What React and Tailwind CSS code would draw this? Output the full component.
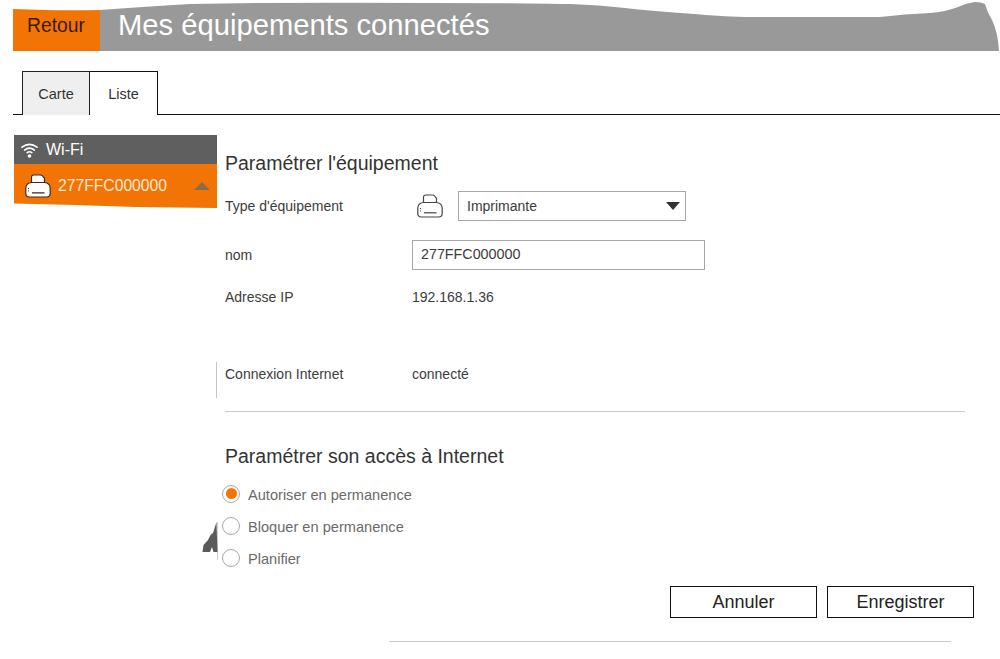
import React from "react";

function PrinterIcon({ fill, stroke, className }) {
  return (
    <svg viewBox="0 0 26 24" className={className} fill="none" stroke={stroke} strokeWidth="1.2" strokeLinejoin="round">
      <path d="M6.5 11V3.2Q6.5 1 8.7 1H15.5Q16.8 1 17.6 2L19.5 4.4V11" fill={fill} />
      <path d="M6.5 8.5H19.5Q22.5 8.8 24 10.5Q25.2 12 25.2 14.5V19.5Q25.2 23 21.5 23H4.5Q0.8 23 0.8 19.5V14.5Q0.8 12 2 10.5Q3.5 8.8 6.5 8.5Z" fill={fill} />
      <path d="M7 18.8H19.5" />
      <path d="M3.5 14V18" strokeDasharray="1 1.4" strokeWidth="1" />
    </svg>
  );
}

function WifiIcon() {
  return (
    <svg viewBox="0 0 18 18" className="w-[17px] h-[17px]" fill="none" stroke="#fff" strokeWidth="1.7" strokeLinecap="round">
      <path d="M1 5.5Q9 -0.5 17 5.5" />
      <path d="M3.8 8.5Q9 4.5 14.2 8.5" />
      <path d="M6.5 11.2Q9 9.4 11.5 11.2" />
      <circle cx="9" cy="14.8" r="1.9" fill="#fff" stroke="none" />
    </svg>
  );
}

function InfoRow({ label, className, children }) {
  return (
    <div className={`flex items-center ${className}`}>
      <span className="w-[187px] shrink-0 text-[14px] text-[#3c3c3c]">{label}</span>
      {children}
    </div>
  );
}

function RadioRow({ label, checked, className }) {
  return (
    <div className={`flex items-center gap-[8px] ${className}`}>
      <span className="w-[18px] h-[18px] rounded-full border border-[#a8a8a8] bg-white flex items-center justify-center shrink-0">
        {checked && <span className="w-[11px] h-[11px] rounded-full bg-[#f27405]" />}
      </span>
      <span className="text-[14.6px] leading-[18px] text-[#6a6a6a] mt-[3px]">{label}</span>
    </div>
  );
}

export default function App() {
  return (
    <div className="relative w-[1000px] h-[659px] overflow-hidden bg-white font-['Liberation_Sans',Arial,sans-serif]">
      {/* --- HEADER --- */}
      <div className="ml-[13px] h-[51px] bg-[#999999] flex">
        <div className="w-[87px] bg-[#f27405] pt-[15px] pl-[14px] text-[19.3px] leading-[22px] text-[#3a1a04]">Retour</div>
        <h1 className="ml-[18px] pt-[8px] text-[29.2px] leading-[34px] text-white">Mes équipements connectés</h1>
      </div>

      {/* torn top edge of the screenshot */}
      <svg viewBox="0 0 1000 52" className="absolute left-0 top-0 w-[1000px] h-[52px]" fill="#fff">
        <path d="M0 0H1000V51.5H999Q998 32 992 20Q987 12 985 4Q981 2 975 2Q966 3 958 7Q945 12 930 13Q905 14 880 17H745Q715 16 695 14Q650 11 625 8Q600 5 570 4Q530 3 430 3Q300 2 190 4Q140 7 100 10Q60 11 13 9V51.5H0Z" />
      </svg>

      {/* --- TABS --- */}
      <div className="relative ml-[13px] mt-[20px] h-[44px] border-b border-[#111] flex pl-[9px]">
        <div className="w-[68px] h-[44px] bg-[#efefef] border-l border-t border-r border-[#222] flex items-center justify-center text-[14.5px] text-[#333] pt-[2px]">Carte</div>
        <div className="w-[68px] h-[44px] bg-white border-t border-r border-[#111] flex items-center justify-center text-[14.5px] text-[#333] pt-[2px]">Liste</div>
      </div>

      <div className="flex">
        {/* --- SIDEBAR --- */}
        <div className="ml-[14px] w-[203px] mt-[20px] shrink-0">
          <div className="h-[29px] bg-[#5f5f5f] flex items-center pl-[7px] gap-[8px] text-[16px] text-white pt-[1px]">
            <WifiIcon />
            Wi-Fi
          </div>
          <div className="h-[44px] bg-[#f27405] flex items-center pl-[11px] text-[15.7px] text-[#ffe9d2] [clip-path:polygon(0_0,100%_0,100%_100%,60%_98%,30%_93%,0_90%)]">
            <PrinterIcon fill="#fff" stroke="#3a2a1a" className="w-[26px] h-[24px] mb-[1px]" />
            <span className="ml-[7px]">277FFC000000</span>
            <span className="ml-auto mr-[7px] w-0 h-0 border-l-[8px] border-r-[8px] border-b-[8px] border-l-transparent border-r-transparent border-b-[#8f6a48]" />
          </div>
        </div>

        {/* --- FORM --- */}
        <div className="ml-[8px] w-[740px] shrink-0">
          <h2 className="mt-[36px] text-[19.5px] leading-[24px] text-[#333]">Paramétrer l'équipement</h2>
          <InfoRow label="Type d'équipement" className="mt-[16px] h-[30px]">
            <PrinterIcon fill="#fff" stroke="#444" className="w-[26px] h-[24px] ml-[5px]" />
            <div className="ml-[15px] w-[228px] h-[30px] border border-[#a8a8a8] bg-white flex items-center pl-[8px] pr-[5px] text-[14px] text-[#3c3c3c]">
              Imprimante
              <span className="ml-auto w-0 h-0 border-l-[7px] border-r-[7px] border-t-[8px] border-l-transparent border-r-transparent border-t-[#333]" />
            </div>
          </InfoRow>
          <InfoRow label="nom" className="mt-[19px] h-[30px]">
            <div className="w-[293px] h-[30px] border border-[#a8a8a8] bg-white flex items-center pl-[8px] text-[14.3px] text-[#3c3c3c]">277FFC000000</div>
          </InfoRow>
          <InfoRow label="Adresse IP" className="mt-[17px] h-[20px]">
            <span className="text-[14px] text-[#3c3c3c]">192.168.1.36</span>
          </InfoRow>
          <InfoRow label="Connexion Internet" className="mt-[57px] h-[20px]">
            <span className="text-[14px] text-[#3c3c3c]">connecté</span>
          </InfoRow>
          <div className="mt-[27px] h-px bg-[#c9c9c9]" />

          <h2 className="mt-[32px] text-[19.5px] leading-[24px] text-[#333]">Paramétrer son accès à Internet</h2>
          <div className="-ml-[3px] mt-[15px]">
            <RadioRow label="Autoriser en permanence" checked />
            <RadioRow label="Bloquer en permanence" className="mt-[11px]" />
            <RadioRow label="Planifier" className="mt-[11px]" />
          </div>
          <div className="flex mt-[18px] gap-[10px] pl-[445px]">
            <button className="w-[147px] shrink-0 h-[32px] border border-[#111] bg-white text-[18px] text-[#222]">Annuler</button>
            <button className="w-[147px] shrink-0 h-[32px] border border-[#111] bg-white text-[18px] text-[#222]">Enregistrer</button>
          </div>
          <div className="mt-[23px] ml-[164px] w-[562px] h-px bg-[#c9c9c9]" />
        </div>
      </div>

      {/* stray marks left over from the screenshot */}
      <div className="absolute left-[216px] top-[362px] w-px h-[36px] bg-[#c4c4c4]" />
      <div className="absolute left-[217px] top-[522px] w-px h-[38px] bg-[#d0d0d0]" />
      <svg viewBox="0 0 16 32" className="absolute left-[202px] top-[521px] w-[16px] h-[32px]" fill="#5a5a5a">
        <path d="M14.5 1L15.5 31H11.5L10 26L8 31H0.5L1.5 24L6 19L8.5 14L11 12Z" />
      </svg>
    </div>
  );
}
